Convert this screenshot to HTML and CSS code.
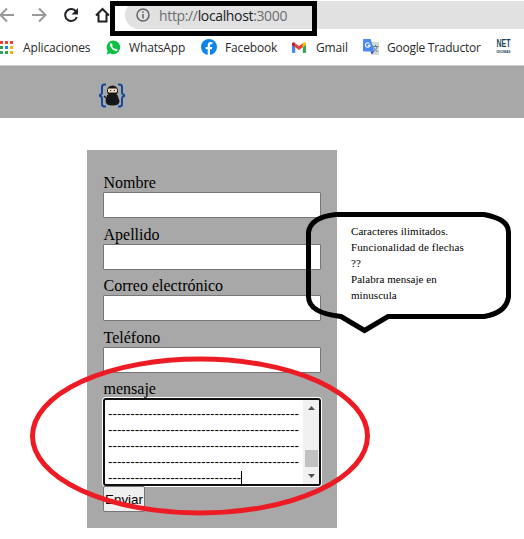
FILE: index.html
```html
<!DOCTYPE html>
<html lang="es">
<head>
<meta charset="utf-8">
<title>Formulario de contacto</title>
<link rel="stylesheet" href="styles.css">
</head>
<body>
<div class="toolbar">
  <svg class="nav" width="110" height="29" viewBox="0 0 110 29" fill="none" stroke-width="2">
    <path d="M14 15H1M7 8.500L.5 15 7 21.500" stroke="#999"/>
    <path d="M32 15h13M39 8.500l6.500 6.500-6.500 6.500" stroke="#999"/>
    <path d="M76 11.500A6 6 0 1 0 76.800 17" stroke="#202124" stroke-width="2"/>
    <path d="M78 8v6.500h-6.500z" fill="#202124"/>
    <path d="M96 15.500L102.500 9l6.500 6.500M98.500 14v7.500h8V14" stroke="#202124" stroke-width="2"/>
  </svg>
  <div class="address">
    <svg class="info" width="14" height="14" viewBox="0 0 14 14" fill="none" stroke="#5f6368" stroke-width="1.500"><circle cx="7" cy="7" r="6"/><path d="M7 6v4.500M7 3.300v1.500"/></svg>
    <span class="url">http://<b>localhost</b>:3000</span>
  </div>
</div>
<div class="bookmarks">
  <svg class="bm apps" width="14" height="13" viewBox="0 0 14 13"><path fill="#ea4335" d="M0 0h3v3H0zM5 0h3v3H5zM10 0h3v3h-3z"/><path fill="#34a05a" d="M0 5h3v3H0zM0 10h3v3H0zM5 10h3v3H5z"/><path fill="#1a88f0" d="M5 5h3v3H5z"/><path fill="#fbb009" d="M10 5h3v3h-3zM10 10h3v3h-3z"/></svg>
  <span class="t1">Aplicaciones</span>
  <svg class="bm" width="15" height="15" viewBox="0 0 15 15"><path fill="#0ac144" d="M7.500.5a6.800 6.800 0 1 1-3.300 12.800L.5 14.500l1.200-3.600A6.800 6.800 0 0 1 7.500.5z"/><path d="M4.800 4.300c0 3 2.800 6 5.900 6" fill="none" stroke="#fff" stroke-width="1.600"/><path d="M4.500 3.500l1.700 2.300M9 9.200l2.300 1.200" stroke="#fff" stroke-width="1.700"/></svg>
  <span class="t2">WhatsApp</span>
  <svg class="bm" width="16" height="16" viewBox="0 0 16 16"><circle cx="8" cy="8" r="8" fill="#0b84ee"/><path fill="#fff" d="M6.700 16v-5.700H4.600V8h2.100V6.300c0-2.200 1.200-3.200 3-3.200l1.700.1v2h-1C9.400 5.200 9 5.700 9 6.500V8h2.300l-.4 2.300H9V16z"/></svg>
  <span class="t3">Facebook</span>
  <svg class="bm" width="14" height="11" viewBox="0 0 14 11"><path fill="#4285f4" d="M0 2h3.200v9H1a1 1 0 0 1-1-1z"/><path fill="#34a853" d="M10.800 2H14v8a1 1 0 0 1-1 1h-2.200z"/><path fill="#ea4335" d="M3.200 1.200L7 4l3.800-2.800v4L7 8 3.200 5.200z"/><path fill="#c5221f" d="M0 2C0 0 2-.4 3.200 1.200v4L0 3z"/><path fill="#fbbc04" d="M14 2c0-2-2-2.400-3.200-.8v4L14 3z"/></svg>
  <span class="t4">Gmail</span>
  <svg class="bm" width="16" height="16" viewBox="0 0 16 16"><path fill="#d5d8db" d="M6 3h9.300q.7 0 .7.700V15q0 .7-.7.700H9z"/><path fill="#4889f4" d="M.7 0h7l3.500 12.500H.7Q0 12.500 0 11.800V.7Q0 0 .7 0z"/><path fill="#3349b5" d="M7.500 12.500h3.700L8.700 15.500z"/><path fill="none" stroke="#fff" stroke-width="1.100" d="M6.500 4.500A2.300 2.300 0 1 0 7 6.400H4.800"/><path fill="none" stroke="#607d8b" d="M9.500 7.500h6M12.400 6v1.500M14 7.500c-.5 3-2 4-3.500 5M10.500 8.500l4 4.500"/></svg>
  <span class="t5">Google Traductor</span>
  <svg class="net" width="15" height="16" viewBox="0 0 15 16" fill="#203f5c"><text class="net-top" x="0.500" y="8" textLength="14" lengthAdjust="spacingAndGlyphs">NET</text><text class="net-sub" x="0.500" y="14" textLength="14" lengthAdjust="spacingAndGlyphs">IDIOMAS</text></svg>
</div>
<header class="site">
  <svg width="28" height="26" viewBox="0 0 28 26"><path d="M8 1.500H6.500Q4 1.500 4 4v5q0 3-3 3.500 3 .5 3 3.500v5q0 2.500 2.500 2.500H8M20 1.500h1.500Q24 1.500 24 4v5q0 3 3 3.500-3 .5-3 3.500v5q0 2.500-2.500 2.500H20" fill="none" stroke="#104a9e" stroke-width="2"/><path d="M9 12h10.500l2 6q0 4.500-7 4.500t-7-4.500z" fill="#171719"/><circle cx="14.500" cy="8" r="5.500" fill="#171719"/><path d="M6 13l5 5" stroke="#171719" stroke-width="1.300"/><rect x="10" y="5.500" width="9" height="4" rx="1" fill="#f3dfc8"/><path d="M12 7.500h1.200M15.800 7.500H17" stroke="#222" stroke-width="1.200"/></svg>
</header>
<form class="form">
  <label>Nombre</label><input type="text">
  <label>Apellido</label><input type="text">
  <label>Correo electrónico</label><input type="text">
  <label>Teléfono</label><input type="text">
  <label>mensaje</label>
  <div class="area">
    <div class="lines">
      <div>-------------------------------------------</div>
      <div>-------------------------------------------</div>
      <div>-------------------------------------------</div>
      <div>-------------------------------------------</div>
      <div>------------------------------<i class="caret"></i></div>
    </div>
    <svg class="scroll" width="16" height="84" viewBox="0 0 16 84"><path fill="#f1f1f1" d="M0 0h16v84H0z"/><path fill="#c1c1c1" d="M2 50h13v17H2z"/><path fill="#505050" d="M5 10l3.500-4L12 10zM5 74h7l-3.500 4z"/></svg>
  </div>
  <button type="button">Enviar</button>
</form>
<svg class="marks" width="524" height="539" viewBox="0 0 524 539" fill="none">
  <path d="M112.500 3.500H314.500V33.500H112.500z" stroke="#000" stroke-width="5"/>
  <path d="M336 214.500H484Q508.500 219 508.500 232V297Q506 313 484 316.500H388L364.500 330.500 341 316.500Q309 313 308.500 297V232Q311 217 336 214.500z" stroke="#000" stroke-width="5"/>
  <ellipse cx="200" cy="436" rx="167.500" ry="77" stroke="#ed1c24" stroke-width="5"/>
</svg>
<div class="note">Caracteres ilimitados.<br><span class="wide">Funcionalidad de flechas</span><br>??<br>Palabra mensaje en<br>minuscula</div>
</body>
</html>
```

FILE: styles.css
```css
* { box-sizing: border-box; }
body { margin: 0; width: 524px; height: 539px; overflow: hidden; position: relative; background: #fff; }
.toolbar { display: flex; height: 29px; }
.nav { flex: none; }
.address { display: flex; align-items: center; width: 420px; height: 28px; margin: 1px 0 0 15px; padding-left: 11px; border-radius: 14px 0 0 14px; background: #e1e1e1; font: 14px "Open Sans", sans-serif; color: #6b6e72; }
.url { margin-left: 9px; width: 129px; white-space: nowrap; letter-spacing: -.35px; }
.url b { font-weight: 400; color: #202124; }
.bookmarks { display: flex; align-items: center; height: 36px; font: 12px "Open Sans", sans-serif; letter-spacing: -.15px; color: #292929; white-space: nowrap; }
.bookmarks span, .bm { flex: none; }
.t1 { width: 83px; margin-left: 9px; }
.t2 { width: 72px; margin-left: 8px; }
.t3 { width: 67px; margin-left: 8px; }
.t4 { width: 47px; margin-left: 10px; }
.t5 { width: 109px; margin-left: 8px; letter-spacing: -.25px; }
.net { flex: none; overflow: visible; }
.net-top { font: 700 10px "Liberation Sans", sans-serif; letter-spacing: 0; }
.net-sub { font: 700 4px "Liberation Sans", sans-serif; letter-spacing: 0; }
.site { height: 53px; border-top: 1px solid #cbcbcb; background: #a8a8a8; padding: 17px 0 0 98px; }
.form { width: 250px; height: 378px; margin: 32px 0 0 87px; padding: 24px 16px 0; background: #a8a8a8; font: 16px/18px "Liberation Serif", serif; color: #000; }
label { display: block; height: 18px; padding-left: .5px; }
input { display: block; width: 218px; height: 26px; margin: 0 0 7.500px; border: 1px solid #767676; border-radius: 1px; background: #fff; }
.area { display: flex; justify-content: space-between; width: 218px; height: 88px; border: 2px solid #101010; border-radius: 3px; background: #fff; box-shadow: 0 0 0 1px #fff; overflow: hidden; }
.lines { padding: 6px 0 0 3px; font: 13.333px/16px "Liberation Sans", sans-serif; white-space: nowrap; }
.lines div { height: 16px; }
.caret { display: inline-block; width: 1px; height: 15px; background: #000; vertical-align: -4px; }
.scroll { flex: none; }
button { display: block; width: 42px; height: 26px; margin: 0; padding: 0; border: 1px solid #767676; border-radius: 2px; background: #efefef; color: #000; font: 13.333px "Liberation Sans", sans-serif; }
.marks { position: absolute; left: 0; top: 0; }
.note { position: absolute; left: 351px; top: 223px; font: 11px/16px "Liberation Serif", serif; color: #000; white-space: nowrap; letter-spacing: .05px; }
.wide { letter-spacing: .12px; }
```
